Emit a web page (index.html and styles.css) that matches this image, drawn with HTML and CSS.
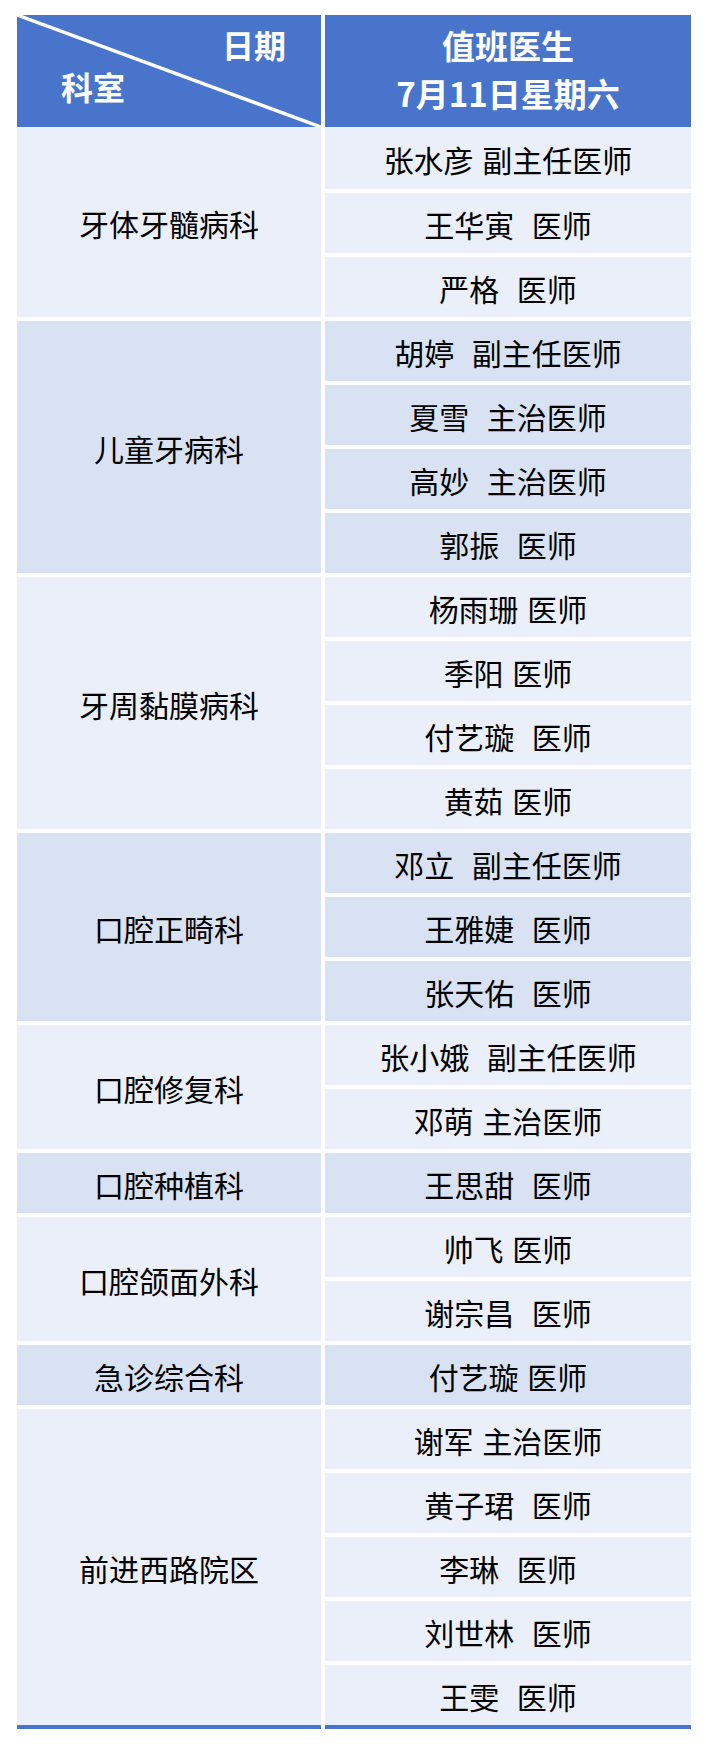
FILE: index.html
```html
<!DOCTYPE html>
<html lang="zh-CN">
<head>
<meta charset="utf-8">
<title>值班医生</title>
<link rel="stylesheet" href="styles.css">
</head>
<body>
<div class="schedule">
  <div class="head">
    <div class="head-cell head-corner">
      <svg class="diag" viewBox="0 0 304 112" preserveAspectRatio="none" aria-hidden="true">
        <line x1="0" y1="0" x2="304" y2="112" stroke="#ffffff" stroke-width="3.5"/>
      </svg>
      <span class="corner-date">日期</span>
      <span class="corner-dept">科室</span>
    </div>
    <div class="head-cell head-title">
      <span>值班医生</span>
      <span>7月11日星期六</span>
    </div>
  </div>
  <div class="body">
    <div class="dept light span3">牙体牙髓病科</div>
    <div class="doc light">张水彦 副主任医师</div>
    <div class="doc light">王华寅  医师</div>
    <div class="doc light">严格  医师</div>

    <div class="dept dark span4">儿童牙病科</div>
    <div class="doc dark">胡婷  副主任医师</div>
    <div class="doc dark">夏雪  主治医师</div>
    <div class="doc dark">高妙  主治医师</div>
    <div class="doc dark">郭振  医师</div>

    <div class="dept light span4">牙周黏膜病科</div>
    <div class="doc light">杨雨珊 医师</div>
    <div class="doc light">季阳 医师</div>
    <div class="doc light">付艺璇  医师</div>
    <div class="doc light">黄茹 医师</div>

    <div class="dept dark span3">口腔正畸科</div>
    <div class="doc dark">邓立  副主任医师</div>
    <div class="doc dark">王雅婕  医师</div>
    <div class="doc dark">张天佑  医师</div>

    <div class="dept light span2">口腔修复科</div>
    <div class="doc light">张小娥  副主任医师</div>
    <div class="doc light">邓萌 主治医师</div>

    <div class="dept dark span1">口腔种植科</div>
    <div class="doc dark">王思甜  医师</div>

    <div class="dept light span2">口腔颌面外科</div>
    <div class="doc light">帅飞 医师</div>
    <div class="doc light">谢宗昌  医师</div>

    <div class="dept dark span1">急诊综合科</div>
    <div class="doc dark">付艺璇 医师</div>

    <div class="dept light span5">前进西路院区</div>
    <div class="doc light">谢军 主治医师</div>
    <div class="doc light">黄子珺  医师</div>
    <div class="doc light">李琳  医师</div>
    <div class="doc light">刘世林  医师</div>
    <div class="doc light">王雯  医师</div>
  </div>
  <div class="foot">
    <div class="foot-bar left"></div>
    <div class="foot-bar right"></div>
  </div>
</div>
</body>
</html>
```
FILE: styles.css
```css
html, body {
  margin: 0;
  padding: 0;
  background: #ffffff;
}

body {
  font-family: "Noto Sans CJK SC", "Noto Sans", sans-serif;
  color: #000000;
}

.schedule {
  margin: 15px 0 0 17px;
  width: 674px;
  display: flex;
  flex-direction: column;
}

.head {
  display: flex;
  gap: 4px;
  height: 112px;
}

.head-cell {
  background: #4874cb;
  color: #ffffff;
  font-weight: 700;
}

.head-corner {
  position: relative;
  width: 304px;
  display: flex;
  flex-direction: column;
  font-size: 32px;
}

.diag {
  position: absolute;
  left: 0;
  top: 0;
  width: 100%;
  height: 100%;
}

.corner-date {
  align-self: flex-end;
  line-height: 32px;
  margin-top: 13px;
  margin-right: 35px;
}

.corner-dept {
  align-self: flex-start;
  line-height: 32px;
  margin-top: 10px;
  margin-left: 44px;
}

.head-title {
  width: 366px;
  display: flex;
  flex-direction: column;
  align-items: center;
  justify-content: center;
  font-size: 33px;
  line-height: 48px;
  padding-bottom: 4px;
  box-sizing: border-box;
}

.body {
  display: grid;
  grid-template-columns: 304px 366px;
  grid-template-rows: 62px;
  grid-auto-rows: 60px;
  column-gap: 4px;
  row-gap: 4px;
  grid-auto-flow: row dense;
}

.dept,
.doc {
  display: flex;
  align-items: center;
  justify-content: center;
  font-size: 30px;
  line-height: 36px;
  padding-top: 1px;
  box-sizing: border-box;
  white-space: pre;
  word-spacing: 2px;
}

.dept {
  grid-column: 1;
}

.doc {
  grid-column: 2;
}

.span1 { grid-row: span 1; }
.span2 { grid-row: span 2; }
.span3 { grid-row: span 3; }
.span4 { grid-row: span 4; }
.span5 { grid-row: span 5; }

.light {
  background: #eaeff9;
}

.dark {
  background: #d9e2f3;
}

.foot {
  display: flex;
  gap: 4px;
}

.foot-bar {
  height: 4px;
  background: #4874cb;
}

.foot-bar.left {
  width: 304px;
}

.foot-bar.right {
  width: 366px;
}
```
